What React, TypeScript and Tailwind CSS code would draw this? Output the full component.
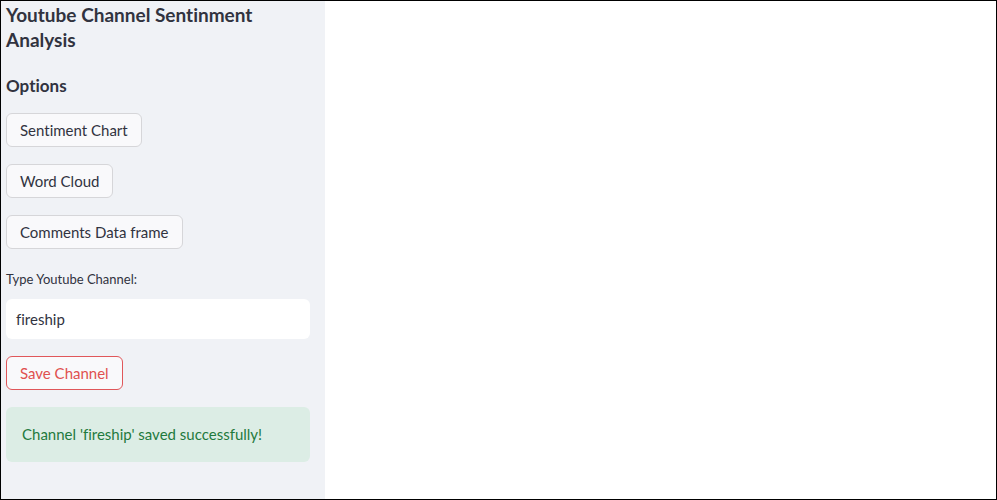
const font = { fontFamily: "Lato, 'Liberation Sans', sans-serif" };

const OptionButton = ({ label }: { label: string }) => (
  <button className="h-[34px] w-fit rounded-md border border-[#d6d6d9] bg-[#f9f9fb] px-[13px] text-[15px] text-[#31333f]">
    {label}
  </button>
);

const App = () => {
  return (
    <div style={font} className="flex h-[500px] w-[997px] border border-black bg-white text-[#31333f] [font-variant-ligatures:none]">
      <aside className="flex w-[324px] flex-col bg-[#f0f2f6] pl-[5px] pr-[15px] pt-[1px]">
        <h1 className="text-[19px] font-bold leading-[25px]">Youtube Channel Sentinment Analysis</h1>
        <h2 className="mt-[22px] text-[17px] font-bold leading-[24px]">Options</h2>
        <div className="mt-[15px] flex flex-col gap-[17px]">
          <OptionButton label="Sentiment Chart" />
          <OptionButton label="Word Cloud" />
          <OptionButton label="Comments Data frame" />
        </div>
        <label className="mt-[20px] text-[13px] leading-[20px]">Type Youtube Channel:</label>
        <div className="mt-[10px] flex h-[40px] items-center rounded-md bg-white px-[10px] text-[15px]">fireship</div>
        <button className="mt-[17px] h-[34px] w-fit rounded-md border border-[#e0575a] bg-[#f9f9fb] px-[13px] text-[15px] text-[#e0504f]">
          Save Channel
        </button>
        <div className="mt-[17px] flex h-[55px] items-center rounded-md bg-[#dcede5] px-4 text-[15px] text-[#1f7a3d]">
          Channel 'fireship' saved successfully!
        </div>
      </aside>
      <main className="flex-1 bg-white" />
    </div>
  );
};

export default App;
